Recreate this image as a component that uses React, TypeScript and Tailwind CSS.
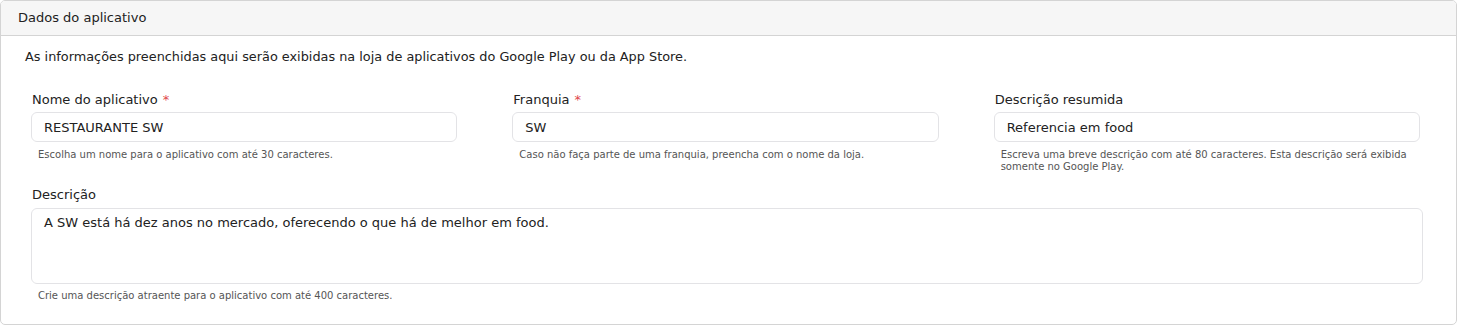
import React from "react";

const Field = ({
  label,
  value,
  help,
  required,
}: {
  label: string;
  value: string;
  help: string;
  required?: boolean;
}) => (
  <div className="flex flex-col">
    <label className="h-[18px] pl-px text-[13px] leading-[18px] text-[#222]">
      {label}
      {required && <span className="ml-[5px] text-[#e0474c]">*</span>}
    </label>
    <input
      readOnly
      value={value}
      className="mt-[3px] h-[30px] w-full rounded-[6px] border border-[#e3e3e6] bg-white px-3 text-[13px] text-[#222] outline-none"
    />
    <p className="mt-[7px] px-[7px] text-[10px] leading-[12px] text-[#555]">{help}</p>
  </div>
);

const App: React.FC = () => {
  return (
    <div className="bg-white font-['DejaVu_Sans',sans-serif]">
      <div className="h-[325px] w-[1457px] overflow-hidden rounded-[5px] border border-[#d4d4d4]">
        {/* Header */}
        <div className="flex h-[35px] items-center border-b border-[#d4d4d4] bg-[#f6f6f6] px-[17px] text-[13px] text-[#222]">
          Dados do aplicativo
        </div>

        {/* Body */}
        <div className="px-[24px] pt-[12px]">
          <p className="text-[12.85px] leading-[18px] text-[#222]">
            As informações preenchidas aqui serão exibidas na loja de aplicativos do Google Play ou da App Store.
          </p>

          <div className="mt-[25px] grid w-[1395px] grid-cols-3 gap-x-[55px] pl-[6px]">
            <Field
              label="Nome do aplicativo"
              value="RESTAURANTE SW"
              help="Escolha um nome para o aplicativo com até 30 caracteres."
              required
            />
            <Field
              label="Franquia"
              value="SW"
              help="Caso não faça parte de uma franquia, preencha com o nome da loja."
              required
            />
            <Field
              label="Descrição resumida"
              value="Referencia em food"
              help="Escreva uma breve descrição com até 80 caracteres. Esta descrição será exibida somente no Google Play."
            />
          </div>

          {/* Descricao */}
          <div className="mt-[13px] flex w-[1398px] flex-col pl-[6px]">
            <label className="h-[18px] pl-px text-[13px] leading-[18px] text-[#222]">Descrição</label>
            <textarea
              readOnly
              value="A SW está há dez anos no mercado, oferecendo o que há de melhor em food."
              className="mt-[4px] h-[76px] w-full resize-none rounded-[6px] border border-[#e3e3e6] bg-white px-3 py-[5px] text-[13px] leading-[18px] text-[#222] outline-none"
            />
            <p className="mt-[6px] px-[7px] text-[10px] leading-[12px] text-[#555]">
              Crie uma descrição atraente para o aplicativo com até 400 caracteres.
            </p>
          </div>
        </div>
      </div>
    </div>
  );
};

export default App;
